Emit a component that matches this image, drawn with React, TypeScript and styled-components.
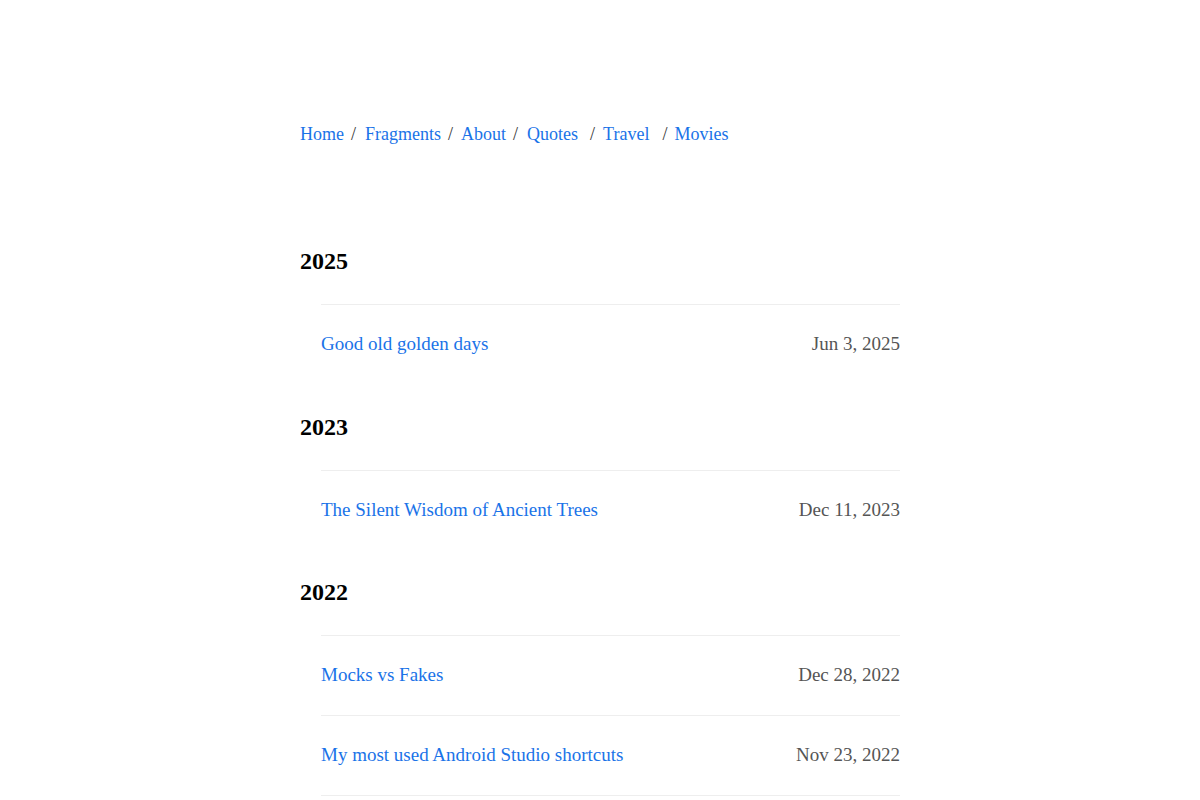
import React from "react";
import styled, { createGlobalStyle } from "styled-components";

const Global = createGlobalStyle`
  html, body { margin: 0; padding: 0; background: #fff; }
  body { font-family: "Liberation Serif", "Times New Roman", serif; color: #000; }
`;

const Main = styled.main`
  width: 600px;
  margin: 0 auto;
  padding-top: 121px;
`;

const Nav = styled.nav`
  display: flex;
  align-items: center;
  font-size: 18px;
  line-height: 27px;
  margin-bottom: 99px;
`;

const NavLink = styled.a<{ $after: number }>`
  color: #1a73e8;
  text-decoration: none;
  margin-right: ${(p) => p.$after}px;
`;

const Sep = styled.span<{ $after: number }>`
  color: #333;
  margin-right: ${(p) => p.$after}px;
`;

const Section = styled.section`
  margin-bottom: 28.5px;
`;

const Year = styled.h2`
  font-size: 24px;
  font-weight: bold;
  line-height: 29px;
  margin: 0 0 28px 0;
`;

const List = styled.ul`
  list-style: none;
  margin: 0;
  padding: 0 0 0 21px;
`;

const Row = styled.li`
  box-sizing: border-box;
  display: flex;
  justify-content: space-between;
  align-items: center;
  border-top: 1px solid #eeeeee;
  height: 80px;
  padding-bottom: 2px;
  font-size: 19px;
  line-height: 27px;
`;

const PostLink = styled.a`
  color: #1a73e8;
  text-decoration: none;
`;

const DateText = styled.span`
  color: #555;
`;

const navItems = [
  { label: "Home", before: 7, after: 9 },
  { label: "Fragments", before: 7, after: 8 },
  { label: "About", before: 7, after: 9 },
  { label: "Quotes", before: 12, after: 8 },
  { label: "Travel", before: 13, after: 7 },
  { label: "Movies", before: 0, after: 0 },
];

const groups = [
  { year: "2025", posts: [{ title: "Good old golden days", date: "Jun 3, 2025" }] },
  { year: "2023", posts: [{ title: "The Silent Wisdom of Ancient Trees", date: "Dec 11, 2023" }] },
  {
    year: "2022",
    posts: [
      { title: "Mocks vs Fakes", date: "Dec 28, 2022" },
      { title: "My most used Android Studio shortcuts", date: "Nov 23, 2022" },
      { title: "Kotlin coroutines in practice", date: "Oct 2, 2022" },
    ],
  },
];

export default function App() {
  return (
    <>
      <Global />
      <Main>
        <Nav>
          {navItems.map((n, i) => (
            <React.Fragment key={n.label}>
              <NavLink href="#" $after={i < navItems.length - 1 ? n.before : 0}>
                {n.label}
              </NavLink>
              {i < navItems.length - 1 && <Sep $after={n.after}>/</Sep>}
            </React.Fragment>
          ))}
        </Nav>
        {groups.map((g) => (
          <Section key={g.year}>
            <Year>{g.year}</Year>
            <List>
              {g.posts.map((p) => (
                <Row key={p.title}>
                  <PostLink href="#">{p.title}</PostLink>
                  <DateText>{p.date}</DateText>
                </Row>
              ))}
            </List>
          </Section>
        ))}
      </Main>
    </>
  );
}
